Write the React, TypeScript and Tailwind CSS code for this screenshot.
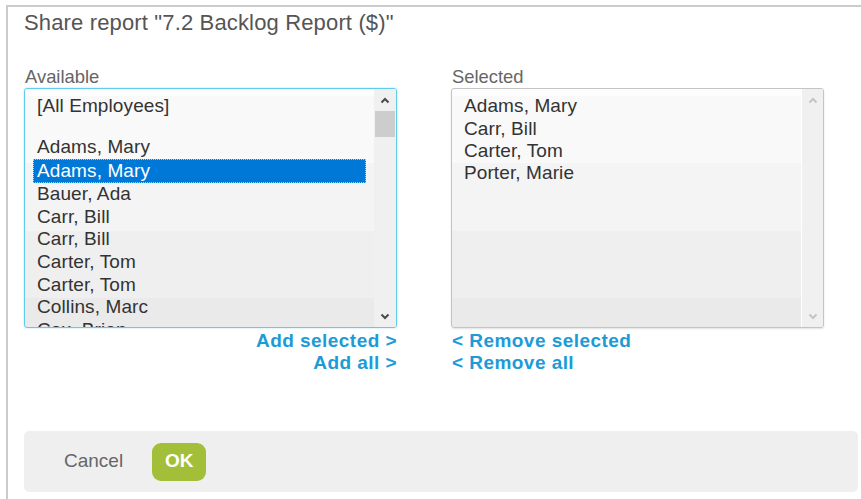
import React from 'react';

type Option = { id: string; label: string; selected?: boolean; spacer?: boolean };

const AVAILABLE: Option[] = [
  { id: 'all', label: '[All Employees]' },
  { id: 'gap', label: '', spacer: true },
  { id: 'adams-1', label: 'Adams, Mary' },
  { id: 'adams-2', label: 'Adams, Mary', selected: true },
  { id: 'bauer', label: 'Bauer, Ada' },
  { id: 'carr-1', label: 'Carr, Bill' },
  { id: 'carr-2', label: 'Carr, Bill' },
  { id: 'carter-1', label: 'Carter, Tom' },
  { id: 'carter-2', label: 'Carter, Tom' },
  { id: 'collins', label: 'Collins, Marc' },
  { id: 'cox', label: 'Cox, Brian' },
];

const SELECTED: Option[] = [
  { id: 'adams', label: 'Adams, Mary' },
  { id: 'carr', label: 'Carr, Bill' },
  { id: 'carter', label: 'Carter, Tom' },
  { id: 'porter', label: 'Porter, Marie' },
];

// stepped background the old listbox skin uses
const LIST_BG =
  'bg-[linear-gradient(to_bottom,#fdfdfd_0px,#fdfdfd_7px,#f9f9f9_7px,#f9f9f9_74px,#f4f4f4_74px,#f4f4f4_142px,#efefef_142px,#efefef_209px,#eaeaea_209px)]';

const Chevron = ({ up, color }: { up?: boolean; color: string }) => (
  <svg width="10" height="7" viewBox="0 0 10 7" fill="none">
    <polyline
      points={up ? '1.5,5.5 5,2 8.5,5.5' : '1.5,1.5 5,5 8.5,1.5'}
      stroke={color}
      strokeWidth="2"
    />
  </svg>
);

const ListBox = ({
  options,
  focused,
}: {
  options: Option[];
  focused?: boolean;
}) => {
  const arrow = focused ? '#4a4a4a' : '#c4c4c4';
  return (
    <div
      className={`flex h-[240px] overflow-hidden rounded-[3px] border ${
        focused
          ? 'border-[#62c9ef] shadow-[0_0_2px_#9fdcf4]'
          : 'border-[#c4c4c4] shadow-[0_1px_2px_rgba(0,0,0,0.12)]'
      } ${LIST_BG}`}
    >
      <div className={`flex-1 overflow-hidden pl-2 pr-2 ${focused ? 'pt-[5.8px]' : 'pt-[6.4px]'}`}>
        {options.map((o) =>
          o.spacer ? (
            <div key={o.id} className="h-[18.7px]" />
          ) : (
            <div
              key={o.id}
              className={`whitespace-nowrap px-1 text-[19px] tracking-[0.1px] ${
                focused ? 'leading-[22.6px]' : 'leading-[22.3px]'
              } ${
                o.selected
                  ? 'border border-dotted border-[#a9cdf2] bg-[#0078d7] px-[3px] leading-[20.6px] text-white'
                  : 'text-[#333333]'
              }`}
            >
              {o.label}
            </div>
          )
        )}
      </div>
      <div
        className={`flex w-[22px] flex-col bg-[#f0f0f0] ${
          focused ? '' : 'border-l border-white'
        }`}
      >
        <div className="flex h-[22px] items-center justify-center">
          <Chevron up color={arrow} />
        </div>
        {focused && <div className="mx-px h-[26px] bg-[#cdcdcd]" />}
        <div className="flex-1" />
        <div className="flex h-[22px] items-center justify-center">
          <Chevron color={arrow} />
        </div>
      </div>
    </div>
  );
};

export default function App() {
  return (
    <div className="h-[499px] w-[861px] overflow-hidden bg-white pl-[6px] pt-[5px] font-['Liberation_Sans',Arial,sans-serif]">
      <div className="h-[494px] border-l-2 border-t-2 border-[#cbcbcb] pl-4 pr-[3px]">
        <h1 className="mt-[3px] text-[22px] leading-[26px] tracking-[0.15px] text-[#555555]">
          Share report "7.2 Backlog Report ($)"
        </h1>

        <div className="mt-[30px] grid grid-cols-[373px_373px] gap-x-[54px]">
          <div>
            <div className="pl-px text-[18.4px] leading-[22px] text-[#666666]">Available</div>
            <ListBox options={AVAILABLE} focused />
          </div>
          <div>
            <div className="pl-px text-[18.4px] leading-[22px] text-[#666666]">Selected</div>
            <ListBox options={SELECTED} />
          </div>

          <div className="mt-[2px] flex flex-col items-end text-[19px] font-bold leading-[22px] tracking-[0.45px] text-[#1b9bd7]">
            <a href="#">Add selected &gt;</a>
            <a href="#">Add all &gt;</a>
          </div>
          <div className="mt-[2px] flex flex-col items-start pl-px text-[19px] font-bold leading-[22px] tracking-[0.45px] text-[#1b9bd7]">
            <a href="#">&lt; Remove selected</a>
            <a href="#">&lt; Remove all</a>
          </div>
        </div>

        <div className="mt-[57px] flex h-[61px] items-center rounded-[5px] bg-[#efefef] pl-10">
          <button className="text-[19px] text-[#666666]">Cancel</button>
          <button className="ml-[29px] h-[38px] w-[54px] rounded-[9px] bg-[#a3bf3a] text-[19px] font-bold text-white">
            OK
          </button>
        </div>
      </div>
    </div>
  );
}
